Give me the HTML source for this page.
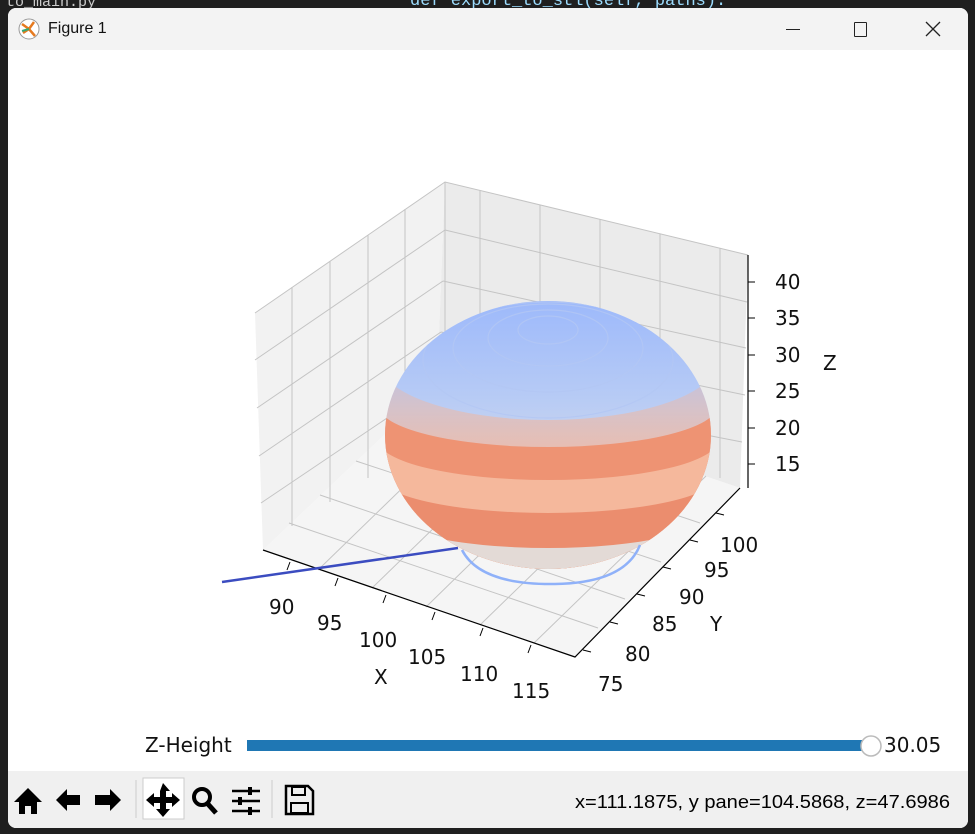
<!DOCTYPE html>
<html><head><meta charset="utf-8"><style>
body{margin:0;width:975px;height:834px;background:#1f1f1f;overflow:hidden;font-family:"Liberation Sans",sans-serif;position:relative}
.win{position:absolute;left:8px;top:8px;width:960px;height:820px;background:#fff;border-radius:8px;overflow:hidden}
.title{position:absolute;left:0;top:0;width:960px;height:42px;background:#f3f3f3}
.tb{position:absolute;left:0;top:763px;width:960px;height:57px;background:#f0f0f0}
</style></head><body>
<div style="position:absolute;left:6px;top:-6px;color:#ccc;font:15px 'Liberation Mono',monospace">to_main.py</div>
<div style="position:absolute;left:410px;top:-8px;color:#9cdcfe;font:17px 'Liberation Mono',monospace">def export_to_stl(self, paths):</div>
<div class="win">
<div class="title">
<svg width="22" height="22" style="position:absolute;left:10px;top:10px" viewBox="0 0 22 22"><circle cx="11" cy="11" r="10" fill="#fff" stroke="#999"/><path d="M4 6L11 11L17 18M5 15L11 11L16 4" stroke="#e57a20" stroke-width="2.5"/><path d="M11 11L4 13" stroke="#3a7" stroke-width="2"/></svg>
<div style="position:absolute;left:40px;top:12px;font-size:16px;color:#111">Figure 1</div>
<div style="position:absolute;left:778px;top:21px;width:14px;height:1px;background:#222"></div>
<div style="position:absolute;left:846px;top:14px;width:11px;height:13px;border:1.5px solid #222;border-radius:1px"></div>
<svg width="16" height="16" style="position:absolute;left:917px;top:13px"><path d="M1 1L15 15M15 1L1 15" stroke="#222" stroke-width="1.3"/></svg>
</div>
</div>
<svg width="975" height="834" style="position:absolute;left:0;top:0" font-family="DejaVu Sans, sans-serif" font-size="20">
<defs>
<clipPath id="sp"><ellipse cx="548" cy="435" rx="163" ry="134"/></clipPath>
<linearGradient id="top" x1="0" y1="0" x2="0" y2="1"><stop offset="0" stop-color="#9db9fb"/><stop offset="0.35" stop-color="#b7cbf5"/><stop offset="0.7" stop-color="#dcdde6"/><stop offset="1" stop-color="#ead8cf"/></linearGradient>
<linearGradient id="pe" x1="0" y1="0" x2="0" y2="1"><stop offset="0" stop-color="#f2b79e" stop-opacity="0.2"/><stop offset="0.5" stop-color="#f2b49a" stop-opacity="0.9"/><stop offset="1" stop-color="#f3ae92"/></linearGradient>
</defs>
<polygon points="255,313 445,182 437,385 263,550" fill="#f2f2f2"/>
<polygon points="445,182 748,255 740,488 437,385" fill="#ebebeb"/>
<polygon points="263,550 437,385 740,488 575,657" fill="#f5f5f5"/>
<g stroke="#c4c4c4" stroke-width="1" fill="none">
<path d="M292,287V526M330,261V502M368,235V478M405,209V454M255,360L445,230M257,408L443,281M259,456L441,332M261,503L439,383"/>
<path d="M480,190V397M540,205V417M600,219V438M660,234V458M720,248V478M445,230L747,302M443,281L746,348M441,332L745,395M439,383L742,442"/>
<path d="M318,570L490,403M372,588L544,421M426,607L598,439M480,625L652,458M534,643L706,476M289,523L598,628M320,495L625,599M356,461L661,562M397,422L700,523"/>
<path d="M255,313L445,182L748,255M445,182V385"/>
</g>
<path d="M263,550L575,657L740,488M748,255V488" stroke="#000" stroke-width="1.2" fill="none"/>
<g stroke="#000" stroke-width="1"><path d="M290,562l-3,8M338,578l-3,8M386,595l-3,8M435,612l-3,8M483,628l-3,8M531,645l-3,8M583,650l8,2M610,622l8,2M637,594l8,2M663,567l8,2M690,540l8,2M716,513l8,2M748,282h7M748,318h7M748,355h7M748,391h7M748,428h7M748,464h7"/></g>
<g clip-path="url(#sp)">
<rect x="380" y="300" width="340" height="280" fill="url(#top)"/>
<g stroke="#b3c7f4" fill="none" stroke-width="1.2" opacity="0.8"><ellipse cx="548" cy="330" rx="30" ry="14"/><ellipse cx="548" cy="338" rx="60" ry="28"/><ellipse cx="548" cy="348" rx="95" ry="44"/><ellipse cx="548" cy="360" rx="125" ry="58"/></g>
<path d="M378,360 A170,60 0 0 0 718,360 L718,600 L378,600Z" fill="url(#pe)"/>
<path d="M378,405 A170,42 0 0 0 718,405 L718,600 L378,600Z" fill="#ee9373"/>
<path d="M378,440 A170,40 0 0 0 718,440 L718,600 L378,600Z" fill="#f5b89c"/>
<path d="M378,475 A170,38 0 0 0 718,475 L718,600 L378,600Z" fill="#eb8d6e"/>
<path d="M378,508 A170,40 0 0 0 718,508 L718,600 L378,600Z" fill="#e3dad6"/>
</g>
<path d="M222,582L458,548" stroke="#3b4cc0" stroke-width="2.5"/>
<path d="M462,550Q480,585 555,584Q625,583 640,545" stroke="#8fb1f9" stroke-width="2.5" fill="none"/>
<g fill="#111">
<text x="775" y="289">40</text><text x="775" y="325">35</text><text x="775" y="362">30</text><text x="775" y="398">25</text><text x="775" y="435">20</text><text x="775" y="471">15</text><text x="823" y="370">Z</text>
<text x="269" y="614">90</text><text x="317" y="630">95</text><text x="359" y="647">100</text><text x="408" y="664">105</text><text x="460" y="681">110</text><text x="512" y="698">115</text><text x="374" y="684">X</text>
<text x="720" y="552">100</text><text x="704" y="577">95</text><text x="679" y="604">90</text><text x="652" y="631">85</text><text x="625" y="661">80</text><text x="598" y="691">75</text><text x="710" y="631">Y</text>
<text x="145" y="752">Z-Height</text><text x="884" y="752">30.05</text>
</g>
<rect x="247" y="740" width="624" height="11" fill="#1f77b4"/>
<circle cx="871" cy="746" r="10" fill="#fff" stroke="#bbb" stroke-width="1.5"/>
</svg>
<div class="tb" style="left:8px;top:771px;border-radius:0 0 8px 8px"></div>
<svg width="975" height="834" style="position:absolute;left:0;top:0">
<rect x="143" y="778" width="41" height="41" fill="#fff" stroke="#ccc"/>
<path d="M136,780V818M272,780V818" stroke="#ccc"/>
<path d="M14,802L28,788L42,802H37V814H31V806H25V814H19V802Z" fill="#000"/>
<path d="M56,800L67,789V795H80V805H67V811Z" fill="#000"/>
<path d="M121,800L110,789V795H95V805H110V811Z" fill="#000"/>
<path d="M163,783L170,791H166V797H172V793L180,800L172,807V803H166V809H170L163,817L156,809H160V803H154V807L146,800L154,793V797H160V791Z" fill="#000"/>
<circle cx="202" cy="797" r="8" fill="none" stroke="#000" stroke-width="4"/><path d="M207,803L216,813" stroke="#000" stroke-width="5"/>
<path d="M232,791H260M232,801H260M232,811H260" stroke="#000" stroke-width="2.5"/><rect x="248" y="787" width="4" height="8"/><rect x="238" y="797" width="4" height="8"/><rect x="248" y="807" width="4" height="8"/>
<path d="M286,786H308L313,791V814H286Z" fill="none" stroke="#000" stroke-width="2.5"/><rect x="292" y="787" width="13" height="8" fill="none" stroke="#000" stroke-width="2"/><rect x="291" y="803" width="17" height="10" fill="none" stroke="#000" stroke-width="2"/>
<text x="575" y="808" textLength="375" lengthAdjust="spacingAndGlyphs" font-family="Liberation Sans, sans-serif" font-size="18" fill="#000">x=111.1875, y pane=104.5868, z=47.6986</text>
</svg>
</body></html>
